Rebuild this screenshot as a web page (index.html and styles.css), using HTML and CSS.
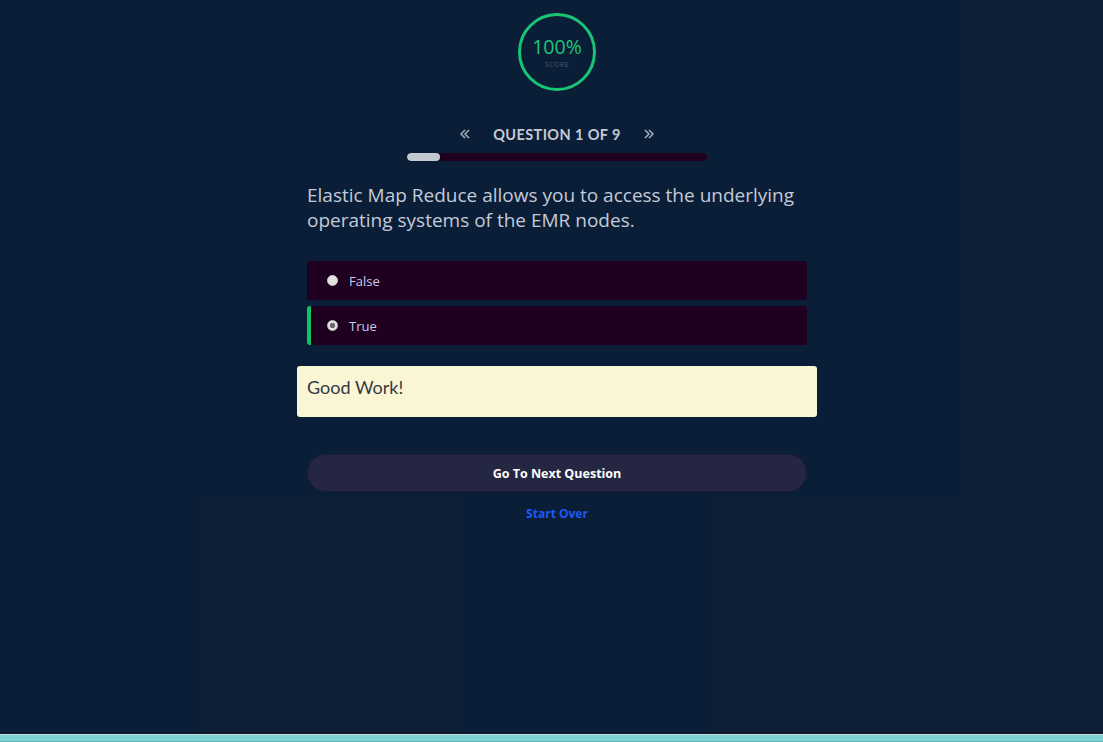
FILE: index.html
```html
<!DOCTYPE html>
<html>
<head>
<meta charset="utf-8">
<link rel="stylesheet" href="styles.css">
</head>
<body>
<div class="page">
  <div class="main">
    <div class="left">
      <div class="card-wrap">
        <div class="card">
          <div class="score">
            <div class="score-val">100%</div>
            <div class="score-lbl">SCORE</div>
          </div>
          <div class="nav">
            <span class="chev">
              <svg width="12" height="12" viewBox="0 0 12 12"><path d="M6 2 L2 6 L6 10 M10 2 L6 6 L10 10" fill="none" stroke="#aeb6c4" stroke-width="1.4"/></svg>
            </span>
            <span class="nav-title">QUESTION 1 OF 9</span>
            <span class="chev">
              <svg width="12" height="12" viewBox="0 0 12 12"><path d="M2 2 L6 6 L2 10 M6 2 L10 6 L6 10" fill="none" stroke="#aeb6c4" stroke-width="1.4"/></svg>
            </span>
          </div>
          <div class="progress"><div class="progress-fill" style="width:11%"></div></div>
          <p class="question">Elastic Map Reduce allows you to access the underlying operating systems of the EMR nodes.</p>
          <div class="options">
            <div class="option"><span class="radio"></span><span class="opt-text">False</span></div>
            <div class="option selected"><span class="radio checked"></span><span class="opt-text">True</span></div>
          </div>
          <div class="feedback">Good Work!</div>
          <button class="next">Go To Next Question</button>
          <a class="start-over" href="#">Start Over</a>
        </div>
      </div>
      <div class="lower">
        <div class="col dark"></div>
        <div class="col light"></div>
        <div class="col dark"></div>
        <div class="col light"></div>
      </div>
    </div>
    <div class="side"></div>
  </div>
  <div class="footer"></div>
</div>
</body>
</html>
```

FILE: styles.css
```css
html, body {
  margin: 0;
  padding: 0;
  background: #0b1e37;
}
.page {
  height: 742px;
  display: flex;
  flex-direction: column;
  overflow: hidden;
}
.main {
  flex: 1;
  display: grid;
  grid-template-columns: 963px 1fr;
}
.left {
  display: flex;
  flex-direction: column;
}
.card-wrap {
  padding-left: 151px;
  height: 501px;
  flex-shrink: 0;
}
.card {
  width: 812px;
  height: 501px;
  display: flex;
  flex-direction: column;
  align-items: center;
  box-sizing: border-box;
  padding-top: 13px;
  font-family: "Open Sans", "Noto Sans", sans-serif;
}
.card > * {
  flex-shrink: 0;
}
.score {
  width: 78px;
  height: 78px;
  box-sizing: border-box;
  border: 3px solid #19c474;
  border-radius: 50%;
  display: flex;
  flex-direction: column;
  align-items: center;
  justify-content: center;
}
.score-val {
  color: #1ec47a;
  font-size: 19.5px;
  line-height: 22px;
  margin-top: 0;
}
.score-lbl {
  color: #4e5a70;
  font-size: 7px;
  letter-spacing: 0.5px;
  line-height: 9px;
  margin-top: 2px;
}
.nav {
  margin-top: 33px;
  height: 20px;
  display: flex;
  align-items: center;
}
.chev {
  display: flex;
  width: 12px;
  height: 12px;
}
.nav-title {
  font-family: "Lato", "Open Sans", sans-serif;
  font-weight: 700;
  font-size: 14.5px;
  letter-spacing: 0.4px;
  color: #c4cad6;
  margin: 0 22px;
}
.progress {
  margin-top: 9px;
  width: 300px;
  height: 8px;
  border-radius: 4px;
  background: #21001f;
  overflow: hidden;
}
.progress-fill {
  height: 100%;
  background: #c3c9d1;
  border-radius: 4px;
}
.question {
  width: 500px;
  margin: 22px 0 0 0;
  font-size: 19px;
  line-height: 25px;
  color: #c3cad8;
  font-family: "Open Sans", "Noto Sans", sans-serif;
}
.options {
  margin-top: 28px;
  width: 500px;
  display: flex;
  flex-direction: column;
  gap: 6px;
}
.option {
  height: 39px;
  background: #200020;
  border-radius: 3px;
  display: flex;
  align-items: center;
  box-sizing: border-box;
  padding-left: 20px;
}
.option.selected {
  border-left: 4px solid #13c15e;
  padding-left: 16px;
}
.radio {
  width: 11px;
  height: 11px;
  border-radius: 50%;
  background: #e2e2e2;
  box-sizing: border-box;
  border: 1px solid #c8c8c8;
}
.radio.checked {
  background: radial-gradient(circle, #6a6a6a 0 2.5px, #e2e2e2 3px);
}
.opt-text {
  margin-left: 11px;
  font-size: 13px;
  color: #c5cde6;
}
.feedback {
  margin-top: 21px;
  width: 520px;
  height: 51px;
  box-sizing: border-box;
  background: #faf5d3;
  border-radius: 3px;
  padding: 10px 10px;
  font-family: "Lato", "Open Sans", sans-serif;
  font-size: 18px;
  color: #343a44;
}
.next {
  margin-top: 37px;
  width: 500px;
  height: 38px;
  border-radius: 19px;
  border: 1px solid #1e1c34;
  background: #252641;
  color: #ffffff;
  font-family: "Open Sans", sans-serif;
  font-weight: 700;
  font-size: 12.5px;
  cursor: pointer;
}
.start-over {
  margin-top: 13px;
  color: #1c5af5;
  font-weight: 700;
  font-size: 12px;
  text-decoration: none;
}
.lower {
  flex: 1;
  display: grid;
  grid-template-columns: 200px 257px 255px 251px;
}
.col.light {
  background: #0e1e37;
}
.side {
  background: #0e1e37;
}
.footer {
  height: 8px;
  flex-shrink: 0;
  border-top: 1px solid #cfd6d6;
  background: linear-gradient(#7dd2d2 0 6px, #62b3b3 6px);
  box-sizing: border-box;
}
```
